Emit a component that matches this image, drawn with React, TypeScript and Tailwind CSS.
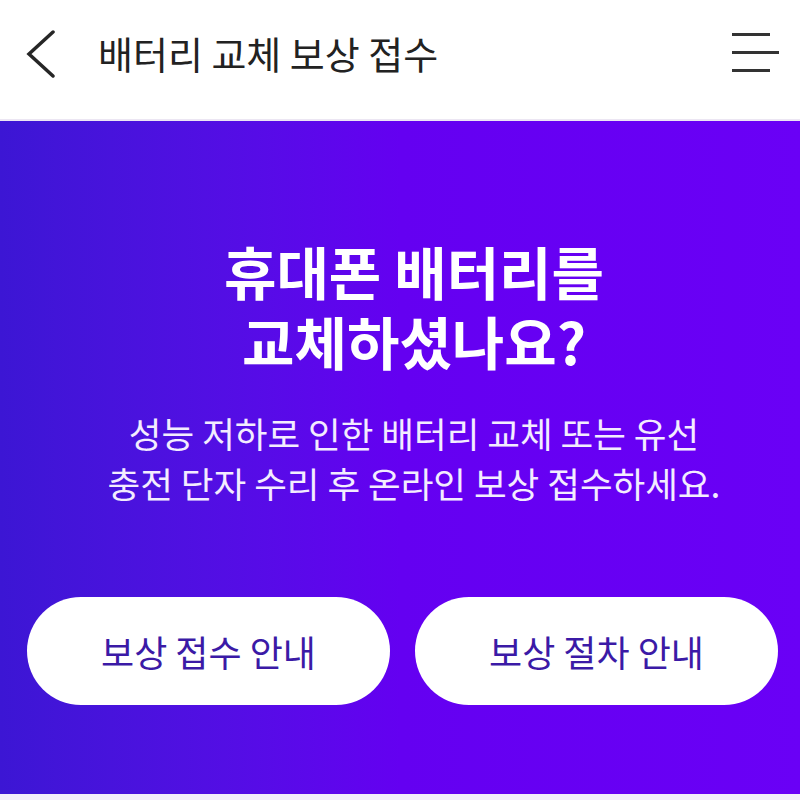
export default function App() {
  const font = {
    fontFamily: '"Noto Sans CJK KR", "Noto Sans", sans-serif',
  };

  return (
    <div className="w-[800px] min-h-[800px] bg-[#f3eefb]" style={font}>
      <header className="h-[121px] bg-white border-b-2 border-[#ece6f3] pb-[16px]">
        <div className="h-[105px] flex items-center pl-[24px] pr-[21px]">
          <button className="w-[34px] h-[50px] flex items-center justify-start">
            <svg width="34" height="50" viewBox="0 0 34 50" fill="none">
              <polyline
                points="29,4 5,26 29,48"
                stroke="#262626"
                strokeWidth="3.5"
                strokeLinecap="round"
                strokeLinejoin="miter"
              />
            </svg>
          </button>
          <h1 className="ml-[40px] text-[38px] leading-none text-[#222]">
            배터리 교체 보상 접수
          </h1>
          <button className="ml-auto w-[47px] h-[50px] flex flex-col justify-center gap-[15px]">
            <span className="block w-[38px] h-[3px] bg-[#333]" />
            <span className="block w-[47px] h-[3px] bg-[#333]" />
            <span className="block w-[38px] h-[3px] bg-[#333]" />
          </button>
        </div>
      </header>

      <section className="h-[673px] bg-gradient-to-r from-[#3c16d4] via-[#6400f1] via-50% to-[#6a00f6] pt-[114px] pl-[27px] pr-[22px] flex flex-col items-center">
        <div className="w-full pl-[23px] flex flex-col items-center">
          <h2 className="text-[57px] leading-[70px] font-bold text-white text-center">
            <span className="block">휴대폰 배터리를</span>
            <span className="block">교체하셨나요?</span>
          </h2>
          <p className="mt-[33px] text-[35.5px] leading-[50px] text-[#f3ecff] text-center whitespace-nowrap">
            <span className="block">성능 저하로 인한 배터리 교체 또는 유선</span>
            <span className="block">충전 단자 수리 후 온라인 보상 접수하세요.</span>
          </p>
        </div>
        <div className="mt-[89px] w-full grid grid-cols-2 gap-[25px]">
          <button className="h-[108px] rounded-full bg-white text-[#3b1aa6] text-[36px]">
            보상 접수 안내
          </button>
          <button className="h-[108px] rounded-full bg-white text-[#3b1aa6] text-[36px]">
            보상 절차 안내
          </button>
        </div>
      </section>
    </div>
  );
}
